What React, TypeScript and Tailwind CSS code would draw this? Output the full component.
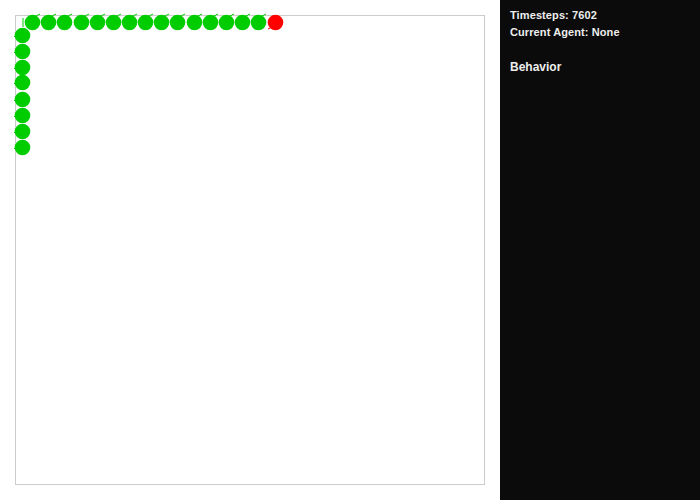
import React from "react";

const topXs = [32, 48, 64, 81, 97, 113, 129, 145, 161, 177, 194, 210, 226, 242, 258];
const leftYs = [35, 51, 67, 82, 99, 115, 131, 147];

export default function App() {
  return (
    <div className="flex w-[700px] h-[500px] bg-white" style={{ fontFamily: '"Liberation Sans", Arial, sans-serif' }}>
      <div className="w-[500px] h-[500px] p-[15px]">
        <div className="relative w-[470px] h-[470px] border border-[#cccccc]">
          <svg
            className="absolute left-[-16px] top-[-16px] overflow-visible"
            width="470"
            height="470"
            viewBox="0 0 470 470"
          >
            <line x1="23" y1="18" x2="23" y2="27" stroke="#00cc00" strokeWidth="1" />
            {leftYs.map((y) => (
              <line key={"l" + y} x1="14" y1={y + 1} x2="17" y2={y + 4} stroke="#00cc00" strokeWidth="1" />
            ))}
            {topXs.map((x) => (
              <line key={"t" + x} x1={x + 4} y1="16" x2={x + 8} y2="14" stroke="#00cc00" strokeWidth="1" />
            ))}
            {leftYs.map((y) => (
              <circle key={y} cx="22.5" cy={y + 0.5} r="7.8" fill="#00cc00" />
            ))}
            {topXs.map((x) => (
              <circle key={x} cx={x + 0.5} cy="22.5" r="7.8" fill="#00cc00" />
            ))}
            <line x1="268" y1="29" x2="272" y2="27" stroke="#ff0000" strokeWidth="1" />
            <circle cx="275.5" cy="22.5" r="7.8" fill="#ff0000" />
          </svg>
        </div>
      </div>
      <div className="w-[200px] h-[500px] bg-[#0b0b0b] px-[10px] pt-[7px] text-[#eeeeee] font-bold">
        <div className="text-[11px] leading-[17px] tracking-[0.1px]">Timesteps: 7602</div>
        <div className="text-[11px] leading-[17px] tracking-[0.1px]">Current Agent: None</div>
        <div className="mt-[18px] text-[12px] leading-[17px]">Behavior</div>
      </div>
    </div>
  );
}
